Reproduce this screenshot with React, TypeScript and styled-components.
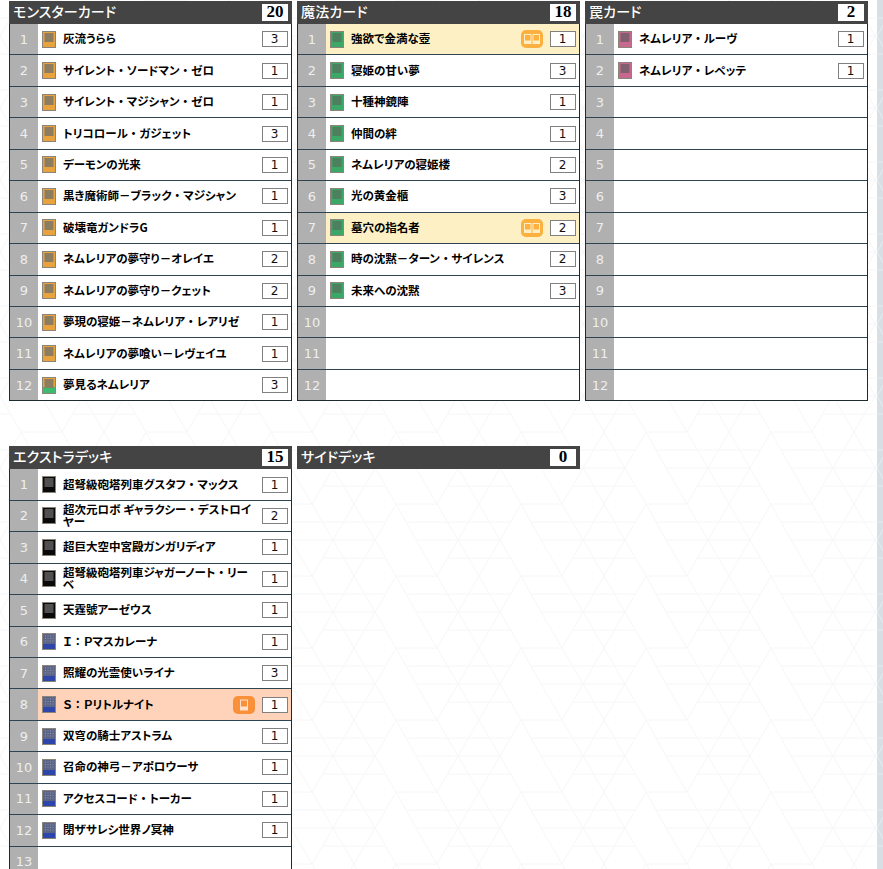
import React from "react";
import styled, { createGlobalStyle } from "styled-components";

const makeTile = (colour: string) => {
  const svg = `<svg xmlns='http://www.w3.org/2000/svg' width='125' height='72'><path d='M0 36L21 0H62L83 36L62 72H21L0 36M83 36H125M21 0L41 36H83M62 72L41 36M104 0L83 36L104 72M125 36L104 0M125 36L104 72M0 18H10M31 18H125M0 54H10M73 54H125' fill='none' stroke='${colour}' stroke-width='1'/></svg>`;
  return `url("data:image/svg+xml,${svg.replace(/</g, "%3C").replace(/>/g, "%3E").replace(/#/g, "%23")}")`;
};

const Global = createGlobalStyle`
  html, body { margin: 0; padding: 0; height: 100%; overflow: hidden; background: #fff; }
  body { font-family: "Noto Sans CJK JP", "Liberation Sans", sans-serif; }
`;

const Page = styled.div`
  display: flex;
  height: 869px;
  overflow: hidden;
`;
const Main = styled.main`
  flex: 1;
  min-width: 0;
  padding: 1px 0 0 9px;
  background-image: ${makeTile("#f5f6f8")};
`;
const EdgeStrip = styled.div`
  flex: 0 0 6px;
  background-color: #d8dfe4;
  background-image: ${makeTile("#e6ebee")};
`;
const DeckGrid = styled.div`
  display: grid;
  grid-template-columns: repeat(3, 283px);
  column-gap: 5px;
  align-items: start;
`;
const ExtraGrid = styled(DeckGrid)`
  margin-top: 45px;
`;
const Panel = styled.section``;
const Header = styled.header`
  display: flex;
  align-items: center;
  justify-content: space-between;
  height: 23px;
  padding: 0 4px;
  background: #444444;
`;
const Title = styled.h2`
  margin: 0 0 3px;
  color: #fff;
  font-size: 14px;
  font-weight: 500;
  line-height: 18px;
  font-feature-settings: "palt";
  letter-spacing: 0.15px;
`;
const Total = styled.div`
  width: 26px;
  height: 17px;
  background: #fff;
  color: #000;
  font: bold 17px/16px "Liberation Serif", serif;
  text-align: center;
`;
const List = styled.ol`
  margin: 0;
  padding: 0;
  list-style: none;
  border: solid #1c2a32;
  border-width: 0 1px 1px 1px;
`;
const Row = styled.li<{ $tone?: "semi" | "limit" }>`
  display: flex;
  align-items: center;
  box-sizing: border-box;
  height: 31.45px;
  border-bottom: 1px solid #2f4450;
  background: ${(p) => (p.$tone === "semi" ? "#fdf0c4" : p.$tone === "limit" ? "#ffd3b9" : "#fff")};
  &:last-child { border-bottom: 0; height: 30.5px; }
`;
const Num = styled.div`
  flex: 0 0 28px;
  align-self: stretch;
  display: flex;
  align-items: center;
  justify-content: center;
  background: #b0b0b0;
  color: #eeeeee;
  font: 13px "DejaVu Sans", sans-serif;
`;
const CardIcon = styled.svg`
  flex: 0 0 14px;
  margin-left: 4px;
`;
const Name = styled.div`
  flex: 1;
  min-width: 0;
  margin: 0 6px 2px 7px;
  color: #000;
  font-size: 11.5px;
  font-weight: 700;
  line-height: 12px;
  font-feature-settings: "palt";
`;
const Wide = styled.span`
  font-feature-settings: "palt" 0;
`;
const Badge = styled.svg`
  flex: 0 0 22px;
  margin-right: 7px;
`;
const Count = styled.div`
  flex: 0 0 26px;
  box-sizing: border-box;
  width: 26px;
  height: 16px;
  margin-right: 3.5px;
  border: 1px solid #808080;
  background: #fff;
  color: #111;
  font: 12px/14px "DejaVu Sans", sans-serif;
  text-align: center;
`;

type Kind = "m" | "p" | "s" | "t" | "f" | "x";
const colours: Record<string, string> = { m: "#e8a33e", s: "#3aa866", t: "#c8688e", f: "#0a0a0a", x: "#2c46ac", p: "#3dbb70" };
const inner: Record<string, string> = { m: "#8c7c60", s: "#4e8060", t: "#80606e", f: "#505050", x: "#5c6488", p: "#8c7c60" };
const dotGrid = [3, 5.5, 8, 10.5];
const dotRows = [2.5, 5, 7.5];

const Icon = ({ kind }: { kind: Kind }) => {
  const fill = kind === "p" ? colours.m : colours[kind];
  return (
    <CardIcon width="14" height="17" viewBox="0 0 14 17" aria-hidden="true">
      <rect x="0.5" y="0.5" width="13" height="16" fill={fill} stroke="#8c8478" />
      {kind === "p" && <rect x="1" y="10" width="12" height="6" fill={colours.p} />}
      {kind === "x" ? (
        <rect x="1" y="1" width="12" height="10" fill={inner.x} />
      ) : (
        <rect x="2.5" y="2" width="9" height="9" fill={inner[kind]} />
      )}
      {kind === "x" &&
        dotGrid.map((x) =>
          dotRows.map((y) => <rect key={`${x}-${y}`} x={x} y={y} width="1" height="1" fill="#8d94ac" />)
        )}
    </CardIcon>
  );
};

const SemiBadge = () => (
  <Badge width="22" height="18" viewBox="0 0 22 18" aria-hidden="true">
    <rect width="22" height="18" rx="5" fill="#fbb03f" />
    <rect x="3" y="4" width="7.5" height="10" fill="#fdeec4" />
    <rect x="11.5" y="4" width="7.5" height="10" fill="#fdeec4" />
    <rect x="4" y="5" width="5.5" height="5.5" fill="#fbb03f" />
    <rect x="12.5" y="5" width="5.5" height="5.5" fill="#fbb03f" />
  </Badge>
);
const LimitBadge = () => (
  <Badge width="22" height="18" viewBox="0 0 22 18" aria-hidden="true">
    <rect width="22" height="18" rx="5" fill="#f8913a" />
    <rect x="7" y="3.5" width="8" height="11" fill="#ffe0cc" />
    <rect x="8" y="4.5" width="6" height="6" fill="#f8913a" />
  </Badge>
);

const CardName = ({ text }: { text: string }) => (
  <Name>
    {text.split(/([・：])/).map((part, i) => (i % 2 ? <Wide key={i}>{part}</Wide> : part))}
  </Name>
);

type Card = { name: string; n: number; kind: Kind; tone?: "semi" | "limit" };
const m = (name: string, n: number, kind: Kind = "m"): Card => ({ name, n, kind });

const monsters: Card[] = [
  m("灰流うらら", 3),
  m("サイレント・ソードマン・ゼロ", 1),
  m("サイレント・マジシャン・ゼロ", 1),
  m("トリコロール・ガジェット", 3),
  m("デーモンの光来", 1),
  m("黒き魔術師－ブラック・マジシャン", 1),
  m("破壊竜ガンドラG", 1),
  m("ネムレリアの夢守り－オレイエ", 2),
  m("ネムレリアの夢守り－クェット", 2),
  m("夢現の寝姫－ネムレリア・レアリゼ", 1),
  m("ネムレリアの夢喰い－レヴェイユ", 1),
  m("夢見るネムレリア", 3, "p"),
];
const spells: Card[] = [
  { ...m("強欲で金満な壺", 1, "s"), tone: "semi" },
  m("寝姫の甘い夢", 3, "s"),
  m("十種神鏡陣", 1, "s"),
  m("仲間の絆", 1, "s"),
  m("ネムレリアの寝姫楼", 2, "s"),
  m("光の黄金櫃", 3, "s"),
  { ...m("墓穴の指名者", 2, "s"), tone: "semi" },
  m("時の沈黙－ターン・サイレンス", 2, "s"),
  m("未来への沈黙", 3, "s"),
];
const traps: Card[] = [m("ネムレリア・ルーヴ", 1, "t"), m("ネムレリア・レペッテ", 1, "t")];
const extra: Card[] = [
  m("超弩級砲塔列車グスタフ・マックス", 1, "f"),
  m("超次元ロボ ギャラクシー・デストロイヤー", 2, "f"),
  m("超巨大空中宮殿ガンガリディア", 1, "f"),
  m("超弩級砲塔列車ジャガーノート・リーベ", 1, "f"),
  m("天霆號アーゼウス", 1, "f"),
  m("Ｉ：Ｐマスカレーナ", 1, "x"),
  m("照耀の光霊使いライナ", 3, "x"),
  { ...m("Ｓ：Ｐリトルナイト", 1, "x"), tone: "limit" },
  m("双穹の騎士アストラム", 1, "x"),
  m("召命の神弓－アポロウーサ", 1, "x"),
  m("アクセスコード・トーカー", 1, "x"),
  m("閉ザサレシ世界ノ冥神", 1, "x"),
];

const Deck = ({ title, total, cards, rows }: { title: string; total: number; cards: Card[]; rows: number }) => (
  <Panel>
    <Header>
      <Title>{title}</Title>
      <Total>{total}</Total>
    </Header>
    {rows > 0 && (
      <List>
        {Array.from({ length: rows }, (_, i) => {
          const c = cards[i];
          return (
            <Row key={i} $tone={c?.tone}>
              <Num>{i + 1}</Num>
              {c && (
                <>
                  <Icon kind={c.kind} />
                  <CardName text={c.name} />
                  {c.tone === "semi" && <SemiBadge />}
                  {c.tone === "limit" && <LimitBadge />}
                  <Count>{c.n}</Count>
                </>
              )}
            </Row>
          );
        })}
      </List>
    )}
  </Panel>
);

export default function App() {
  return (
    <Page>
      <Global />
      <Main>
        <DeckGrid>
          <Deck title="モンスターカード" total={20} cards={monsters} rows={12} />
          <Deck title="魔法カード" total={18} cards={spells} rows={12} />
          <Deck title="罠カード" total={2} cards={traps} rows={12} />
        </DeckGrid>
        <ExtraGrid>
          <Deck title="エクストラデッキ" total={15} cards={extra} rows={13} />
          <Deck title="サイドデッキ" total={0} cards={[]} rows={0} />
        </ExtraGrid>
      </Main>
      <EdgeStrip />
    </Page>
  );
}
